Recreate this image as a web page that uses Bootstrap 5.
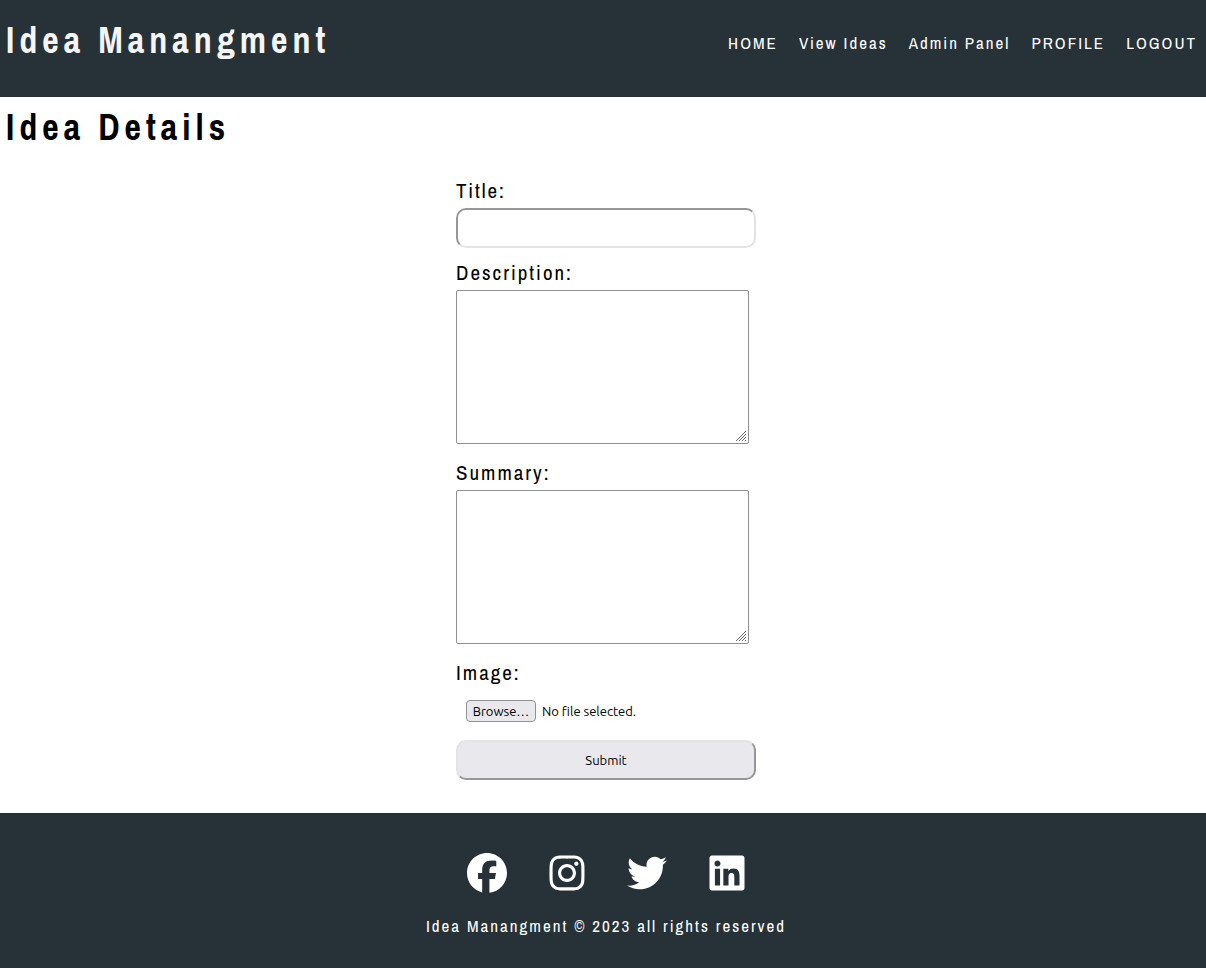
<!DOCTYPE html>
<html lang="en">
<head>
<meta charset="utf-8">
<meta name="viewport" content="width=device-width, initial-scale=1">
<title>Idea Details</title>
<link href="https://cdn.jsdelivr.net/npm/bootstrap@5.3.0/dist/css/bootstrap.min.css" rel="stylesheet">
<style>
  body { font-family: "Archivo Narrow", "Liberation Sans Narrow", "Liberation Sans", sans-serif; font-size: 17px; line-height: 20px; letter-spacing: 2px; color: #000; }
  .bar-dark { background: #273238; }
  .site-head { min-height: 97px; padding: 20px 9px 20px 6px; }
  .page-title { font-size: 36px; line-height: 40px; font-weight: 700; letter-spacing: 5px; margin: 0; }
  .brand-title { color: #f5f5f5; }
  .site-nav { gap: 21px; padding-top: 13px; }
  .site-nav a, .site-foot a { color: #fff; text-decoration: none; }
  .content { padding: 10px 0 33px 6px; }
  .idea-form { width: 300px; max-width: 100%; padding-top: 32px; }
  .field-label { font-size: 21px; line-height: 24px; margin-bottom: 5px; }
  .title-box { height: 40px; border: 2px solid; border-color: #979797 #e3e3e3 #e3e3e3 #979797; border-radius: 10px; padding: 8px; margin-bottom: 13px; }
  .text-area { width: 293px; max-width: 100%; height: 154px; border: 1px solid #8f8f9d; border-radius: 2px; padding: 2px; margin-bottom: 17px; resize: both; }
  .text-area::-webkit-resizer { background: url("data:image/svg+xml,%3Csvg xmlns='http://www.w3.org/2000/svg' width='15' height='15'%3E%3Cpath d='M3 13L13 3M6 13L13 6M9 13L13 9M12 13L13 12' stroke='%23666' fill='none'/%3E%3C/svg%3E") no-repeat right bottom; }
  .control-text { font-family: Ubuntu, "Noto Sans", sans-serif; font-size: 13px; line-height: 16px; letter-spacing: 0; }
  .file-row { height: 42px; padding: 0 10px; margin-bottom: 8px; gap: 6px; }
  .file-row input { cursor: pointer; }
  .browse-face { width: 70px; height: 22px; border: 1px solid #8f8f9d; border-radius: 4px; background: #e9e9ed; }
  .submit-btn { height: 40px; background: #e9e9ed; border: 2px solid; border-color: #e3e3e3 #979797 #979797 #e3e3e3; border-radius: 10px; color: #000; }
  .site-foot { color: #fff; padding: 40px 0 32px 6px; min-height: 155px; }
  .social { gap: 40px; margin-bottom: 23px; padding-left: 2px; }
  .social svg { display: block; width: 40px; height: 40px; fill: #fff; }
</style>
</head>
<body>
<header class="bar-dark site-head d-flex flex-wrap justify-content-between align-items-start">
  <h1 class="page-title brand-title">Idea Manangment</h1>
  <nav class="site-nav d-flex flex-wrap" aria-label="Main">
    <a href="#">HOME</a>
    <a href="#">View Ideas</a>
    <a href="#">Admin Panel</a>
    <a href="#">PROFILE</a>
    <a href="#">LOGOUT</a>
  </nav>
</header>

<main class="content">
  <h2 class="page-title">Idea Details</h2>
  <form class="idea-form mx-auto">
    <label class="field-label d-block" for="title">Title:</label>
    <input class="title-box d-block w-100" type="text" id="title">
    <label class="field-label d-block" for="description">Description:</label>
    <textarea class="text-area d-block" id="description"></textarea>
    <label class="field-label d-block" for="summary">Summary:</label>
    <textarea class="text-area d-block" id="summary"></textarea>
    <label class="field-label d-block" for="image">Image:</label>
    <div class="file-row control-text position-relative d-flex align-items-center">
      <span class="browse-face d-flex align-items-center justify-content-center">Browse…</span>
      <span>No file selected.</span>
      <input class="position-absolute top-0 start-0 w-100 h-100 opacity-0" type="file" id="image">
    </div>
    <button class="submit-btn control-text d-block w-100" type="submit">Submit</button>
  </form>
</main>

<footer class="bar-dark site-foot text-center">
  <div class="social d-flex justify-content-center">
    <a href="#" aria-label="Facebook"><svg viewBox="0 0 512 512"><path d="M512 256C512 114.6 397.4 0 256 0S0 114.6 0 256C0 376 82.7 476.8 194.2 504.5V334.2H141.4V256h52.8V222.3c0-87.1 39.4-127.5 125-127.5c16.2 0 44.2 3.2 55.7 6.4V172c-6-.6-16.5-1-29.6-1c-42 0-58.2 15.9-58.2 57.2V256h83.6l-14.4 78.2H287V510.1C413.8 494.8 512 386.9 512 256z"/></svg></a>
    <a href="#" aria-label="Instagram"><svg viewBox="0 0 448 512"><path d="M224.1 141c-63.6 0-114.9 51.3-114.9 114.9s51.3 114.9 114.9 114.9S339 319.5 339 255.9 287.7 141 224.1 141zm0 189.6c-41.1 0-74.7-33.5-74.7-74.7s33.5-74.7 74.7-74.7 74.7 33.5 74.7 74.7-33.6 74.7-74.7 74.7zm146.4-194.3c0 14.9-12 26.8-26.8 26.8-14.9 0-26.8-12-26.8-26.8s12-26.8 26.8-26.8 26.8 12 26.8 26.8zm76.1 27.2c-1.7-35.9-9.9-67.7-36.2-93.9-26.2-26.2-58-34.4-93.9-36.2-37-2.1-147.9-2.1-184.9 0-35.8 1.7-67.6 9.9-93.9 36.1s-34.4 58-36.2 93.9c-2.1 37-2.1 147.9 0 184.9 1.7 35.9 9.9 67.7 36.2 93.9s58 34.4 93.9 36.2c37 2.1 147.9 2.1 184.9 0 35.9-1.7 67.7-9.9 93.9-36.2 26.2-26.2 34.4-58 36.2-93.9 2.1-37 2.1-147.8 0-184.8zM398.8 388c-7.8 19.6-22.9 34.7-42.6 42.6-29.5 11.7-99.5 9-132.1 9s-102.7 2.6-132.1-9c-19.6-7.8-34.7-22.9-42.6-42.6-11.7-29.5-9-99.5-9-132.1s-2.6-102.7 9-132.1c7.8-19.6 22.9-34.7 42.6-42.6 29.5-11.7 99.5-9 132.1-9s102.7-2.6 132.1 9c19.6 7.8 34.7 22.9 42.6 42.6 11.7 29.5 9 99.5 9 132.1s2.7 102.7-9 132.1z"/></svg></a>
    <a href="#" aria-label="Twitter"><svg viewBox="0 0 512 512"><path d="M459.37 151.716c.325 4.548.325 9.097.325 13.645 0 138.72-105.583 298.558-298.558 298.558-59.452 0-114.68-17.219-161.137-47.106 8.447.974 16.568 1.299 25.34 1.299 49.055 0 94.213-16.568 130.274-44.832-46.132-.975-84.792-31.188-98.112-72.772 6.498.974 12.995 1.624 19.818 1.624 9.421 0 18.843-1.3 27.614-3.573-48.081-9.747-84.143-51.98-84.143-102.985v-1.299c13.969 7.797 30.214 12.67 47.431 13.319-28.264-18.843-46.781-51.005-46.781-87.391 0-19.492 5.197-37.36 14.294-52.954 51.655 63.675 129.3 105.258 216.365 109.807-1.624-7.797-2.599-15.918-2.599-24.04 0-57.828 46.782-104.934 104.934-104.934 30.213 0 57.502 12.67 76.67 33.137 23.715-4.548 46.456-13.32 66.599-25.34-7.798 24.366-24.366 44.833-46.132 57.827 21.117-2.273 41.584-8.122 60.426-16.243-14.292 20.791-32.161 39.308-52.628 54.253z"/></svg></a>
    <a href="#" aria-label="LinkedIn"><svg viewBox="0 0 448 512"><path d="M416 32H31.9C14.3 32 0 46.5 0 64.3v383.4C0 465.5 14.3 480 31.9 480H416c17.6 0 32-14.5 32-32.3V64.3c0-17.8-14.4-32.3-32-32.3zM135.4 416H69V202.2h66.5V416zm-33.2-243c-21.3 0-38.5-17.3-38.5-38.5S80.9 96 102.2 96c21.2 0 38.5 17.3 38.5 38.5 0 21.3-17.2 38.5-38.5 38.5zm282.1 243h-66.4V312c0-24.8-.5-56.7-34.5-56.7-34.6 0-39.9 27-39.9 54.9V416h-66.4V202.2h63.7v29.2h.9c8.9-16.8 30.6-34.5 62.9-34.5 67.2 0 79.7 44.3 79.7 101.9V416z"/></svg></a>
  </div>
  <p class="m-0">Idea Manangment © 2023 all rights reserved</p>
</footer>
<script src="https://cdn.jsdelivr.net/npm/bootstrap@5.3.0/dist/js/bootstrap.bundle.min.js"></script>
</body>
</html>
